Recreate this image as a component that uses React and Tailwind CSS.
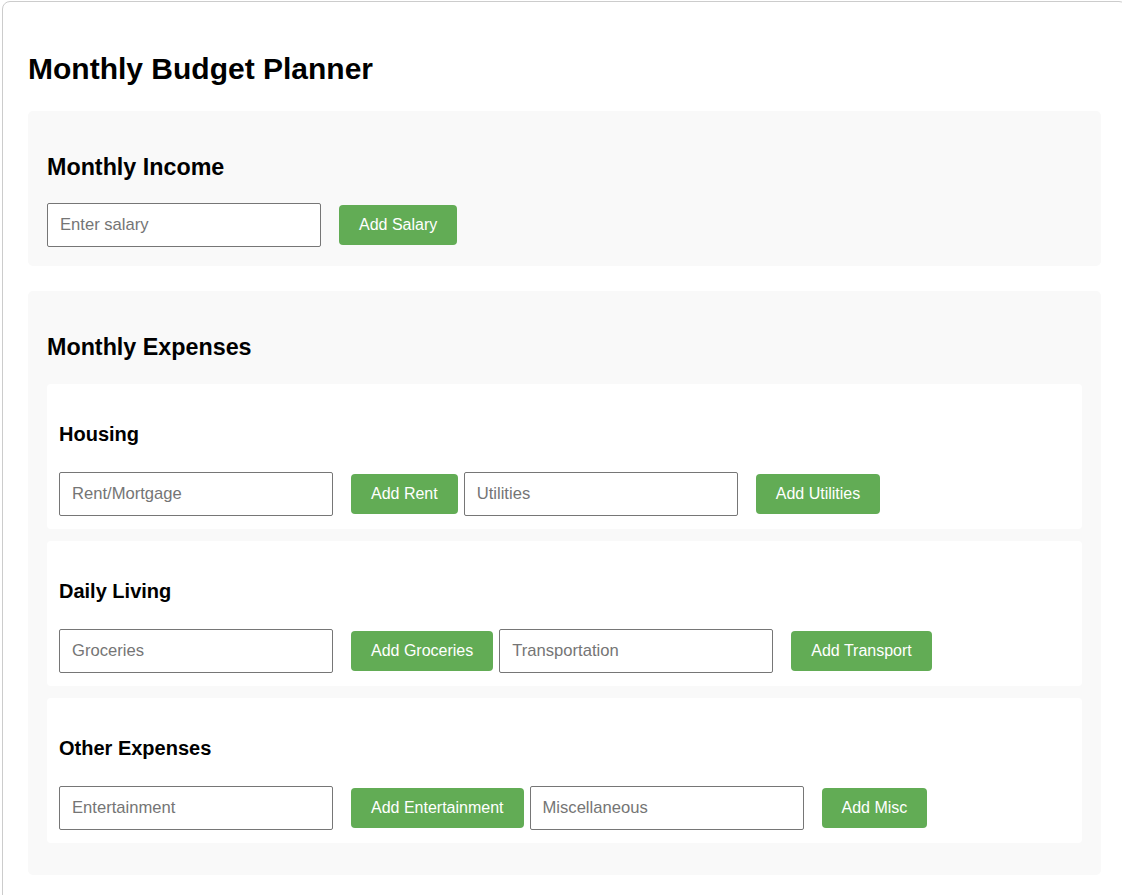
import React from 'react';

const groups = [
    {
        title: 'Housing',
        fields: [
            { placeholder: 'Rent/Mortgage', label: 'Add Rent' },
            { placeholder: 'Utilities', label: 'Add Utilities' },
        ],
    },
    {
        title: 'Daily Living',
        fields: [
            { placeholder: 'Groceries', label: 'Add Groceries' },
            { placeholder: 'Transportation', label: 'Add Transport' },
        ],
    },
    {
        title: 'Other Expenses',
        fields: [
            { placeholder: 'Entertainment', label: 'Add Entertainment' },
            { placeholder: 'Miscellaneous', label: 'Add Misc' },
        ],
    },
];

const Field = ({ placeholder, label, first }) => (
    <>
        <input
            type="number"
            placeholder={placeholder}
            className={`${first ? '' : 'ml-[6px]'} h-[44px] w-[274px] rounded-[2px] border border-[#767676] bg-white px-[12px] text-[16.6px] text-black outline-none placeholder:text-[#757575]`}
        />
        <button className="ml-[18px] h-[40px] rounded-[4px] bg-[#62ac55] px-[20px] text-[16px] text-white">
            {label}
        </button>
    </>
);

const App = () => {
    return (
        <div className="min-h-screen overflow-hidden bg-white font-['Liberation_Sans',Arial,sans-serif] text-black">
            <div className="ml-[2px] mt-[1px] min-h-[920px] w-[1125px] rounded-lg border border-[#cccccc] px-[25px] pt-[24px]">
                <h1 className="mb-[24px] mt-[24px] text-[30px] font-bold leading-[37px]">Monthly Budget Planner</h1>

                <div className="rounded-[5px] bg-[#f9f9f9] px-[19px] pb-[19px] pt-[20px]">
                    <h2 className="mt-[22px] text-[23.3px] font-bold leading-[28px]">Monthly Income</h2>
                    <div className="mt-[22px] flex items-center">
                        <Field placeholder="Enter salary" label="Add Salary" first />
                    </div>
                </div>

                <div className="mt-[25px] rounded-[5px] bg-[#f9f9f9] px-[19px] pb-[20px] pt-[20px]">
                    <h2 className="mb-[23px] mt-[22px] text-[23.3px] font-bold leading-[28px]">Monthly Expenses</h2>
                    {groups.map((g) => (
                        <div key={g.title} className="mb-[12px] rounded-[4px] bg-white px-[12px] pb-[13px] pt-[13px]">
                            <h3 className="mt-[26px] text-[20px] font-bold leading-[23px]">{g.title}</h3>
                            <div className="mt-[26px] flex items-center">
                                {g.fields.map((f, i) => (
                                    <Field key={f.label} placeholder={f.placeholder} label={f.label} first={i === 0} />
                                ))}
                            </div>
                        </div>
                    ))}
                </div>
            </div>
        </div>
    );
};

export default App;
